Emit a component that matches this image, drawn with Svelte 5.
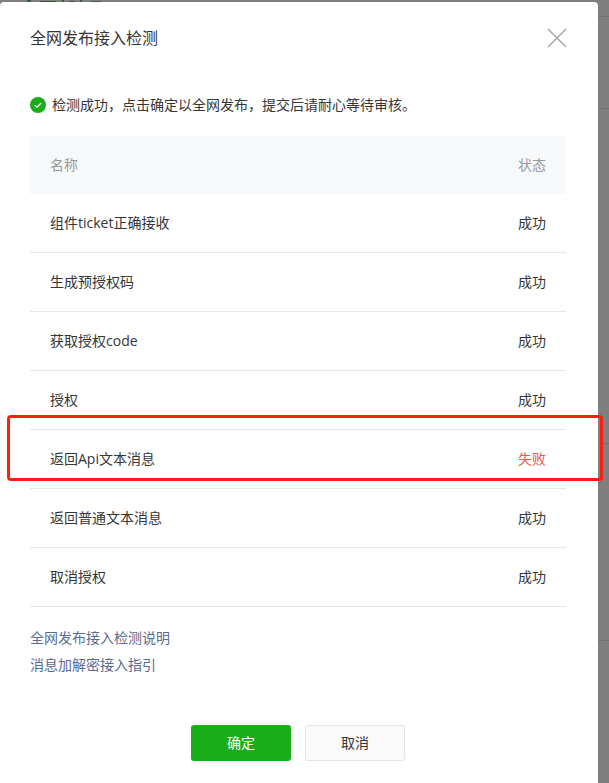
<script>
  const rows = [
    { name: '组件ticket正确接收', status: '成功' },
    { name: '生成预授权码', status: '成功' },
    { name: '获取授权code', status: '成功' },
    { name: '授权', status: '成功' },
    { name: '返回Api文本消息', status: '失败', failed: true },
    { name: '返回普通文本消息', status: '成功' },
    { name: '取消授权', status: '成功' }
  ];
</script>

<div class="page">
  <div class="backdrop-lines">
    <i class="l1"></i><i class="l2"></i><i class="l3"></i><i class="l4"></i>
    <svg class="behind" width="80" height="2" viewBox="0 0 80 2" aria-hidden="true">
      <path d="M0 0h4v2h-4zM13 1h16v1h-16zM35 0h2v2h-2zM42 1h6v1h-6zM53 0h2v2h-2zM64 1h10v1h-10z" fill="#3d5c3d" />
    </svg>
  </div>
  <section class="dialog">
    <header class="head">
      <h2>全网发布接入检测</h2>
      <svg class="close" width="20" height="20" viewBox="0 0 20 20" aria-hidden="true">
        <path d="M1 1L19 19M19 1L1 19" stroke="#a6a6a6" stroke-width="1.5" fill="none" />
      </svg>
    </header>
    <p class="result">
      <svg width="16" height="16" viewBox="0 0 16 16" aria-hidden="true">
        <circle cx="8" cy="8" r="8" fill="#1aad19" />
        <path d="M4.8 8.2L7 10.2L11.2 6" stroke="#fff" stroke-width="1.3" fill="none" />
      </svg>
      <span>检测成功，点击确定以全网发布，提交后请耐心等待审核。</span>
    </p>
    <div class="table">
      <div class="row th"><span>名称</span><span>状态</span></div>
      {#each rows as r}
        <div class="row"><span>{r.name}</span><span class:fail={r.failed}>{r.status}</span></div>
      {/each}
    </div>
    <div class="links">
      <span>全网发布接入检测说明</span>
      <span>消息加解密接入指引</span>
    </div>
    <footer class="foot">
      <button class="primary">确定</button>
      <button class="default">取消</button>
    </footer>
  </section>
  <div class="mark"></div>
</div>

<style>
  :global(body) { margin: 0; }
  .page {
    position: relative;
    width: 609px;
    height: 783px;
    overflow: hidden;
    background: #7f7f7f;
    font-family: "Open Sans", "Noto Sans CJK SC", sans-serif;
    font-size: 14px;
    color: #353535;
    padding-top: 2px;
    box-sizing: border-box;
  }
  .backdrop-lines i {
    position: absolute;
    left: 598px;
    width: 11px;
    height: 1px;
    background: #717171;
  }
  .l1 { top: 16px; }
  .l2 { top: 108px; }
  .l3 { top: 443px; }
  .l4 { top: 640px; }
  .behind {
    position: absolute;
    left: 27px;
    top: 0;
  }
  .dialog {
    position: relative;
    width: 598px;
    height: 781px;
    background: #fff;
    border-radius: 4px 4px 0 0;
    padding: 0 32px 0 30px;
    box-sizing: border-box;
  }
  .head {
    display: flex;
    justify-content: space-between;
    align-items: center;
    height: 74px;
  }
  h2 {
    margin: 0 0 2px;
    font-size: 16px;
    font-weight: 400;
    color: #353535;
    line-height: 24px;
  }
  .close { margin: -2px -1px 0 0; }
  .result {
    display: flex;
    align-items: center;
    gap: 6px;
    height: 20px;
    margin: 19px 0 0;
    line-height: 20px;
  }
  .result svg { flex: none; }
  .table { margin-top: 21px; }
  .row {
    display: flex;
    justify-content: space-between;
    align-items: center;
    height: 59px;
    padding: 0 20px 2px;
    box-sizing: border-box;
    border-bottom: 1px solid #e7e7eb;
  }
  .th {
    height: 58px;
    background: #f6f8f9;
    border-bottom: none;
    color: #9a9a9a;
  }
  .fail { color: #f0564a; }
  .links {
    display: flex;
    flex-direction: column;
    gap: 7px;
    margin-top: 21px;
    color: #576b95;
    line-height: 20px;
  }
  .foot {
    display: flex;
    justify-content: center;
    gap: 14px;
    margin-top: 50px;
  }
  button {
    width: 100px;
    height: 36px;
    padding: 0 0 2px;
    font: inherit;
    border-radius: 3px;
    box-sizing: border-box;
    cursor: pointer;
  }
  .primary { background: #1aad19; color: #fff; border: none; }
  .default { background: #fafafa; color: #353535; border: 1px solid #e5e5e5; }
  .mark {
    position: absolute;
    left: 7px;
    top: 415px;
    width: 596px;
    height: 66px;
    box-sizing: border-box;
    border: 3px solid #ff1d12;
    border-radius: 4px;
  }
</style>
